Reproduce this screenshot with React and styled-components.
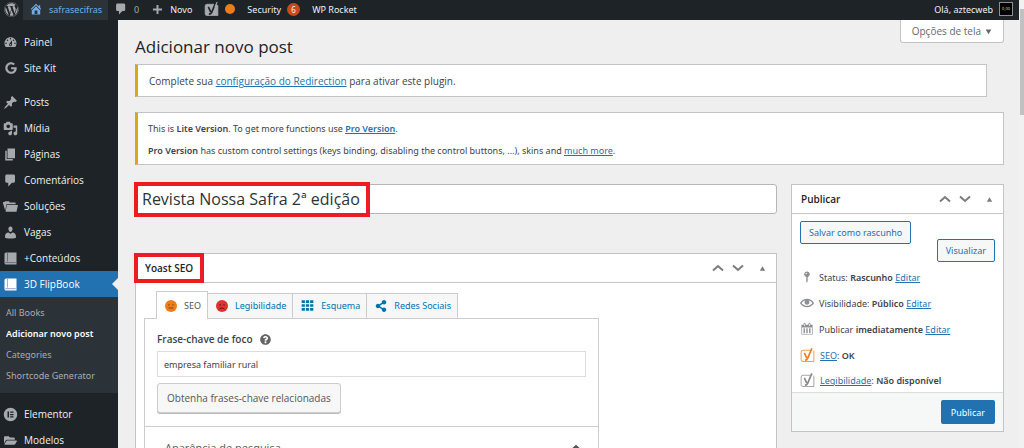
import React from 'react';
import styled, { createGlobalStyle, css } from 'styled-components';
import { FaWordpress, FaGoogle, FaFolderOpen, FaQuestionCircle, FaShareAlt } from 'react-icons/fa';

const GlobalStyle = createGlobalStyle`
  * {
    box-sizing: border-box;
  }
  body {
    margin: 0;
    background: #efefef;
    color: #3c434a;
    font: 10px/13px "Open Sans", "Noto Sans", sans-serif;
  }
  button, input {
    margin: 0;
    font: inherit;
    color: inherit;
  }
  h1, h2, p, ul {
    margin: 0;
    padding: 0;
  }
  ul {
    list-style: none;
  }
  b, strong {
    font-weight: 600;
  }
  svg {
    display: block;
    flex: none;
  }
`;

const smallText = css`
  font-family: "Noto Sans", "Open Sans", sans-serif;
  font-size: 9px;
`;

const Window = styled.div`
  display: flex;
  height: 100vh;
  overflow: hidden;
`;

const Page = styled.div`
  display: flex;
  flex: 1;
  flex-direction: column;
  min-width: 0;
`;

const ScrollTrack = styled.div`
  width: 5px;
  padding: 9px 0 0 1px;
  background: #f1f1f1;
`;

const ScrollThumb = styled.div`
  height: 106px;
  background: #c1c1c1;
`;

/* admin bar */

const AdminBar = styled.header`
  ${smallText}
  display: flex;
  flex: none;
  align-items: center;
  height: 20px;
  background: #1d2327;
  color: #f0f0f1;
`;

const BarLink = styled.a`
  display: flex;
  align-items: center;
  height: 20px;
  padding: 0 ${p => p.$tight ? 4 : 6}px 2px;
  gap: ${p => p.$gap || 6}px;
  color: ${p => p.$muted ? '#a7aaad' : p.$active ? '#72aee6' : '#f0f0f1'};
  background: ${p => p.$active ? '#2c3338' : 'transparent'};
  text-decoration: none;
  white-space: nowrap;
  svg {
    color: ${p => p.$active ? '#72aee6' : '#a7aaad'};
  }
`;

const Spacer = styled.div`
  flex: 1;
`;

const Dot = styled.span`
  width: 10px;
  height: 10px;
  border-radius: 50%;
  background: #ee7c1b;
`;

const Count = styled.span`
  width: 13px;
  height: 13px;
  border-radius: 50%;
  background: #ca4a1f;
  font-size: 8px;
  line-height: 13px;
  text-align: center;
`;

const Avatar = styled.span`
  width: 14px;
  height: 14px;
  border: 1px solid #8c8f94;
  background: #000;
  color: #ddd;
  font-size: 4px;
  line-height: 11px;
  text-align: center;
`;

/* side menu */

const Body = styled.div`
  display: flex;
  flex: 1;
  min-height: 0;
`;

const SideMenu = styled.nav`
  flex: none;
  width: 118px;
  padding-top: 9px;
  background: #1d2327;
`;

const MenuGroup = styled.ul`
  margin-bottom: 8px;
`;

const MenuLink = styled.a`
  position: relative;
  display: flex;
  align-items: center;
  gap: 6px;
  height: 26px;
  padding-left: 3px;
  color: ${p => p.$active ? '#fff' : '#f0f0f1'};
  background: ${p => p.$active ? '#2271b1' : 'transparent'};
  text-decoration: none;
  svg {
    color: ${p => p.$active ? '#fff' : '#a7aaad'};
  }
  ${p => p.$active && css`
    &::after {
      content: '';
      position: absolute;
      right: 0;
      border: 6px solid transparent;
      border-right-color: #efefef;
      border-left: 0;
    }
  `}
`;

const MenuIcon = styled.span`
  display: flex;
  justify-content: center;
  width: 15px;
`;

const SubMenu = styled.ul`
  padding: 5px 6px 7px;
  background: #2c3338;
`;

const SubLink = styled.a`
  ${smallText}
  display: block;
  color: ${p => p.$current ? '#fff' : '#a9acaf'};
  font-weight: ${p => p.$current ? 600 : 400};
  line-height: 21px;
  text-decoration: none;
  white-space: nowrap;
`;

/* content */

const Content = styled.main`
  flex: 1;
  min-width: 0;
  padding: 0 15px 0 17px;
`;

const Heading = styled.div`
  display: flex;
  align-items: flex-start;
  justify-content: space-between;
  height: 44px;
`;

const PageTitle = styled.h1`
  padding-top: 15px;
  color: #1d2327;
  font-size: 17px;
  font-weight: 400;
  line-height: 24px;
`;

const ScreenOptions = styled.button`
  display: flex;
  align-items: center;
  gap: 4px;
  height: 23px;
  padding: 0 11px;
  border: 1px solid #c3c4c7;
  border-top: 0;
  border-radius: 0 0 3px 3px;
  background: #fff;
  color: #646970;
`;

const Notice = styled.section`
  ${p => !p.$inset && smallText}
  display: flex;
  flex-direction: column;
  gap: 9px;
  margin: 0 ${p => p.$inset ? 17 : 0}px 15px 0;
  padding: ${p => p.$inset ? '10px 11px 8px' : '9px 10px 7px'};
  border: 1px solid #c3c4c7;
  border-left: 3px solid #dba617;
  background: #fff;
`;

const Link = styled.a`
  color: #2271b1;
  text-decoration: underline;
`;

const Columns = styled.div`
  display: grid;
  grid-template-columns: 1fr 213px;
  gap: 14px;
  align-items: start;
  margin-top: 19px;
`;

const TitleField = styled.div`
  position: relative;
  margin-bottom: 39px;
`;

const TitleInput = styled.input`
  display: block;
  width: 100%;
  height: 30px;
  padding: 0 6px;
  border: 1px solid #b4b6ba;
  border-radius: 3px;
  background: #fff;
  color: #2c3338;
  font-size: 16px;
`;

const Highlight = styled.span`
  position: absolute;
  top: ${p => p.$top}px;
  left: ${p => p.$left}px;
  width: ${p => p.$width}px;
  height: ${p => p.$height}px;
  border: 4px solid #ed1c24;
  pointer-events: none;
`;

const Box = styled.section`
  border: 1px solid #c3c4c7;
  background: #fff;
`;

const BoxHeader = styled.header`
  position: relative;
  display: flex;
  align-items: center;
  height: 29px;
  padding: 0 4px 0 9px;
  border-bottom: 1px solid #c3c4c7;
`;

const BoxTitle = styled.h2`
  flex: 1;
  color: #1d2327;
  font-size: 10px;
  font-weight: 600;
`;

const ToggleButton = styled.button`
  display: flex;
  align-items: center;
  justify-content: center;
  width: 20px;
  height: 20px;
  margin-left: ${p => p.$apart ? 4 : 0}px;
  padding: 0;
  border: 0;
  background: none;
  color: #787c82;
`;

const Tabs = styled.div`
  display: flex;
  align-items: flex-end;
  margin: 8px 0 0 20px;
`;

const Tab = styled.button`
  ${smallText}
  display: flex;
  align-items: center;
  gap: 7px;
  height: ${p => p.$selected ? 28 : 25}px;
  margin-bottom: ${p => p.$selected ? -1 : 0}px;
  margin-left: ${p => p.$selected ? 0 : -1}px;
  padding: 0 6px 0 8px;
  border: 1px solid #ccc;
  border-bottom: ${p => p.$selected ? 0 : '1px solid #f7f7f7'};
  background: ${p => p.$selected ? '#fff' : '#f7f7f7'};
  color: ${p => p.$selected ? '#555' : '#0073aa'};
  z-index: ${p => p.$selected ? 1 : 0};
`;

const Panel = styled.div`
  width: 455px;
  margin-left: 8px;
  border: 1px solid #ccc;
`;

const Keyphrase = styled.div`
  padding: 14px 12px 13px;
  border-bottom: 1px solid #ccc;
`;

const KeyphraseLabel = styled.div`
  display: flex;
  align-items: center;
  gap: 7px;
  margin-bottom: 5px;
  font-weight: 600;
  svg {
    color: #646464;
  }
`;

const KeyphraseInput = styled.input`
  ${smallText}
  display: block;
  width: 100%;
  height: 26px;
  margin-bottom: 6px;
  padding: 0 6px;
  border: 1px solid #ddd;
  background: #fff;
`;

const RelatedButton = styled.button`
  height: 30px;
  padding: 0 9px;
  border: 1px solid #ccc;
  border-radius: 3px;
  background: #f7f7f7;
  box-shadow: 0 1px 0 #bbb;
  color: #555;
`;

const Collapsible = styled.button`
  display: flex;
  align-items: center;
  justify-content: space-between;
  width: 100%;
  padding: 14px 16px 14px 20px;
  border: 0;
  background: none;
  color: #555;
  font-size: 11px;
`;

const PublishActions = styled.div`
  display: flex;
  flex-direction: column;
  padding: 7px 8px 2px;
`;

const OutlineButton = styled.button`
  ${smallText}
  align-self: ${p => p.$end ? 'flex-end' : 'flex-start'};
  height: 23px;
  margin-top: ${p => p.$end ? -5 : 0}px;
  padding: 0 8px;
  border: 1px solid #2271b1;
  border-radius: 2px;
  background: #f6f7f7;
  color: #2271b1;
`;

const StatusList = styled.ul`
  ${smallText}
  padding: 0 8px;
`;

const StatusItem = styled.li`
  display: flex;
  align-items: center;
  gap: 5px;
  height: ${p => p.$short ? 24 : 26}px;
  svg {
    color: #8c8f94;
  }
`;

const PublishFooter = styled.footer`
  display: flex;
  justify-content: flex-end;
  padding: 7px 8px;
  border-top: 1px solid #dcdcde;
  background: #f6f7f7;
`;

const PrimaryButton = styled.button`
  ${smallText}
  height: 24px;
  padding: 0 10px;
  border: 0;
  border-radius: 2px;
  background: #2271b1;
  color: #fff;
`;

/* icons, all on a 20 unit grid */

const paths = {
  dashboard: 'M3.76 16h12.48c1.1-1.37 1.76-3.11 1.76-5 0-4.42-3.58-8-8-8s-8 3.58-8 8c0 1.89.66 3.63 1.76 5zM10 4c.55 0 1 .45 1 1s-.45 1-1 1-1-.45-1-1 .45-1 1-1zM6 6c.55 0 1 .45 1 1s-.45 1-1 1-1-.45-1-1 .45-1 1-1zm8 0c.55 0 1 .45 1 1s-.45 1-1 1-1-.45-1-1 .45-1 1-1zm-5.37 5.55L12 7v6c0 1.1-.9 2-2 2s-2-.9-2-2c0-.57.24-1.08.63-1.45zM4 10c.55 0 1 .45 1 1s-.45 1-1 1-1-.45-1-1 .45-1 1-1zm12 0c.55 0 1 .45 1 1s-.45 1-1 1-1-.45-1-1 .45-1 1-1zm-5 3c0-.55-.45-1-1-1s-1 .45-1 1 .45 1 1 1 1-.45 1-1z',
  pin: 'M10.44 3.02l1.82-1.82 6.36 6.35-1.83 1.82c-1.05-.68-2.48-.57-3.41.36l-.75.75c-.92.93-1.04 2.35-.35 3.41l-1.83 1.82-2.41-2.41-2.8 2.79c-.42.42-3.38 2.71-3.8 2.29s1.86-3.39 2.28-3.81l2.79-2.79L4.1 9.36l1.83-1.82c1.05.69 2.48.57 3.4-.36l.75-.75c.93-.92 1.05-2.35.36-3.41z',
  media: 'M13 11V4c0-.55-.45-1-1-1h-1.67L9 1H5L3.67 3H2c-.55 0-1 .45-1 1v7c0 .55.45 1 1 1h10c.55 0 1-.45 1-1zM7 4.5c1.38 0 2.5 1.12 2.5 2.5S8.38 9.5 7 9.5 4.5 8.38 4.5 7 5.62 4.5 7 4.5zM14 6h5v10.5c0 1.38-1.12 2.5-2.5 2.5S14 17.88 14 16.5s1.12-2.5 2.5-2.5c.17 0 .34.02.5.05V9h-3V6zm-4 8.05V13h2v3.5c0 1.38-1.12 2.5-2.5 2.5S7 17.88 7 16.5 8.12 14 9.5 14c.17 0 .34.02.5.05z',
  page: 'M6 15V2h10v13H6zm-1 1h8v2H3V5h2v11z',
  comment: 'M5 2h9c1.1 0 2 .9 2 2v7c0 1.1-.9 2-2 2h-2l-5 5v-5H5c-1.1 0-2-.9-2-2V4c0-1.1.9-2 2-2z',
  folder: 'M0 4h2l1-1h5l1 1.500h7.500l.5 2.500H4.500L3 15.500 0 5.500zM5 8h15l-2 9H3.500z',
  user: 'M10 9.25c-2.27 0-2.73-3.44-2.73-3.44C7 4.02 7.82 2 9.97 2c2.16 0 2.98 2.02 2.71 3.81 0 0-.41 3.44-2.68 3.44zm0 2.57L12.72 10c2.39 0 4.52 2.33 4.52 4.53v2.49s-3.65 1.13-7.24 1.13c-3.65 0-7.24-1.13-7.24-1.13v-2.49c0-2.25 1.94-4.48 4.47-4.48z',
  home: 'M16 8.5l1.53 1.53-1.06 1.06L10 4.6l-6.47 6.49-1.06-1.06L10 2.5l4 4v-2h2v4zm-6-2.46l6 5.99V18H4v-5.97zM12 17v-5H8v5h4z',
  plus: 'M17 8.500v3h-5.500V17h-3v-5.500H3v-3h5.500V3h3v5.500z',
  status: 'M14 6c0 1.86-1.28 3.41-3 3.86V16c0 1-2 2-2 2V9.86c-1.72-.45-3-2-3-3.86 0-2.21 1.79-4 4-4s4 1.79 4 4zM8 5c0 .55.45 1 1 1s1-.45 1-1-.45-1-1-1-1 .45-1 1z',
  eye: 'M19.7 9.4C17.7 6 14 3.9 10 3.9S2.3 6 .3 9.4L0 10l.3.6c2 3.4 5.7 5.5 9.7 5.5s7.7-2.1 9.7-5.5l.3-.6-.3-.6zM10 14.1c-3.1 0-6-1.6-7.7-4.1C3.6 8 5.7 6.6 8 6.1c-.9.6-1.500 1.7-1.500 2.9 0 1.9 1.6 3.5 3.5 3.5s3.5-1.6 3.5-3.5c0-1.2-.6-2.3-1.500-2.9 2.3.5 4.4 1.9 5.7 3.9-1.7 2.5-4.6 4.1-7.7 4.1z',
  calendar: 'M15 4h3v14H2V4h3V3c0-.83.67-1.5 1.5-1.5S8 2.17 8 3v1h4V3c0-.83.67-1.5 1.5-1.5S15 2.17 15 3v1zM6 3v2.5c0 .28.22.5.5.5s.5-.22.5-.5V3c0-.28-.22-.5-.5-.5S6 2.72 6 3zm7 0v2.5c0 .28.22.5.5.5s.5-.22.5-.5V3c0-.28-.22-.5-.5-.5s-.5.22-.5.5zm4 14V8H3v9h14zM7 16V9H5v7h2zm4 0V9H9v7h2zm4 0V9h-2v7h2z',
  grid: 'M1 2h5v4H1zM7.500 2h5v4h-5zM14 2h5v4h-5zM1 8h5v4H1zM7.500 8h5v4h-5zM14 8h5v4h-5zM1 14h5v4H1zM7.500 14h5v4h-5zM14 14h5v4h-5z',
  elementor: 'M10 1a9 9 0 1 1 0 18 9 9 0 0 1 0-18zM6 6v8h2V6zM9.500 6v1.700H14V6zM9.500 9.200v1.700H14V9.200zM9.500 12.300V14H14v-1.700z',
  triangle: 'M10 5l6 10H4z',
  triangleDown: 'M2 4h16l-8 14z',
};

const Icon = ({ name, size = 15 }) => (
  <svg width={size} height={size} viewBox="0 0 20 20" fill="currentColor" fillRule="evenodd" aria-hidden="true">
    <path d={paths[name]} />
  </svg>
);

const BookIcon = ({ spine }) => (
  <svg width="15" height="15" viewBox="0 0 20 20" aria-hidden="true">
    <path fill="currentColor" d="M4 2h14v16H4a2 2 0 0 1-2-2V4a2 2 0 0 1 2-2z" />
    <path fill="none" stroke={spine} strokeWidth="1" d="M6 2v12M3 15.500h14" />
  </svg>
);

const Chevron = ({ up }) => (
  <svg width="12" height="8" viewBox="0 0 12 8" fill="none" stroke="currentColor" strokeWidth="2" aria-hidden="true">
    <path d={up ? 'M1 6.500l5-4.500 5 4.500' : 'M1 1.500l5 4.500 5-4.500'} />
  </svg>
);

const Face = ({ color, ink, sad }) => (
  <svg width="12" height="12" viewBox="0 0 12 12" aria-hidden="true">
    <circle cx="6" cy="6" r="6" fill={color} />
    <g fill="none" stroke={ink} strokeWidth="1">
      <path d="M4 4v1.500M8 4v1.500" />
      <path d={sad ? 'M3.500 9q2.500-2.400 5 0' : 'M3.700 8h4.600'} />
    </g>
  </svg>
);

const YoastIcon = ({ color, filled }) => (
  <svg width="15" height="15" viewBox="0 0 20 20" fill="none" aria-hidden="true">
    <path
      d="M13.500 3H4a2.500 2.500 0 0 0-2.500 2.500v10A2.500 2.500 0 0 0 4 18h14.500V5.500a2.500 2.500 0 0 0-1-2"
      stroke={color}
      strokeWidth="1"
      fill={filled ? color : 'none'}
    />
    <g stroke={filled ? '#1d2327' : color} strokeWidth="2.200">
      <path d="M5.800 6.500l3.200 7" />
      <path d="M15.800 .5l-5.600 13.300q-1 2.500-3.700 2.400" />
    </g>
    {filled && <path d="M17.500 0l-3 7" stroke={color} strokeWidth="1.500" />}
  </svg>
);

const mainItems = [
  { label: 'Posts', icon: <Icon name="pin" /> },
  { label: 'Mídia', icon: <Icon name="media" /> },
  { label: 'Páginas', icon: <Icon name="page" /> },
  { label: 'Comentários', icon: <Icon name="comment" /> },
  { label: 'Soluções', icon: <Icon name="folder" /> },
  { label: 'Vagas', icon: <Icon name="user" /> },
  { label: '+Conteúdos', icon: <BookIcon spine="#5b5470" /> },
  { label: '3D FlipBook', icon: <BookIcon spine="#8f86d8" />, active: true },
];

const subItems = ['All Books', 'Adicionar novo post', 'Categories', 'Shortcode Generator'];

const MenuItem = ({ label, icon, active }) => (
  <li>
    <MenuLink href="#" $active={active}>
      <MenuIcon>{icon}</MenuIcon>
      {label}
    </MenuLink>
  </li>
);

const BoxControls = () => (
  <>
    <ToggleButton type="button" aria-label="Mover para cima"><Chevron up /></ToggleButton>
    <ToggleButton type="button" aria-label="Mover para baixo"><Chevron /></ToggleButton>
    <ToggleButton type="button" aria-label="Alternar painel" $apart><Icon name="triangle" size={9} /></ToggleButton>
  </>
);

const Sidebar = () => (
  <SideMenu>
    <MenuGroup>
      <MenuItem label="Painel" icon={<Icon name="dashboard" />} />
      <MenuItem label="Site Kit" icon={<FaGoogle size={12} />} />
    </MenuGroup>
    <MenuGroup>
      {mainItems.map(item => <MenuItem key={item.label} {...item} />)}
      <li>
        <SubMenu>
          {subItems.map((label, i) => (
            <li key={label}><SubLink href="#" $current={i === 1}>{label}</SubLink></li>
          ))}
        </SubMenu>
      </li>
    </MenuGroup>
    <MenuGroup>
      <MenuItem label="Elementor" icon={<Icon name="elementor" />} />
      <MenuItem label="Modelos" icon={<FaFolderOpen size={13} />} />
    </MenuGroup>
  </SideMenu>
);

const YoastBox = () => (
  <Box>
    <BoxHeader>
      <BoxTitle>Yoast SEO</BoxTitle>
      <BoxControls />
      <Highlight $top={-1} $left={-2} $width={70} $height={30} />
    </BoxHeader>
    <Tabs role="tablist">
      <Tab type="button" role="tab" aria-selected="true" $selected><Face color="#ee7c1b" ink="#7a4413" />SEO</Tab>
      <Tab type="button" role="tab"><Face color="#dc3232" ink="#5e1616" sad />Legibilidade</Tab>
      <Tab type="button" role="tab"><Icon name="grid" size={13} />Esquema</Tab>
      <Tab type="button" role="tab"><FaShareAlt size={12} />Redes Sociais</Tab>
    </Tabs>
    <Panel>
      <Keyphrase>
        <KeyphraseLabel>
          <label htmlFor="keyphrase">Frase-chave de foco</label>
          <FaQuestionCircle size={11} />
        </KeyphraseLabel>
        <KeyphraseInput id="keyphrase" defaultValue="empresa familiar rural" />
        <RelatedButton type="button">Obtenha frases-chave relacionadas</RelatedButton>
      </Keyphrase>
      <Collapsible type="button">
        Aparência de pesquisa
        <Chevron up />
      </Collapsible>
    </Panel>
  </Box>
);

const PublishBox = () => (
  <Box>
    <BoxHeader>
      <BoxTitle>Publicar</BoxTitle>
      <BoxControls />
    </BoxHeader>
    <PublishActions>
      <OutlineButton type="button">Salvar como rascunho</OutlineButton>
      <OutlineButton type="button" $end>Visualizar</OutlineButton>
    </PublishActions>
    <StatusList>
      <StatusItem><Icon name="status" size={14} /><span>Status: <b>Rascunho</b> <Link href="#">Editar</Link></span></StatusItem>
      <StatusItem><Icon name="eye" size={14} /><span>Visibilidade: <b>Público</b> <Link href="#">Editar</Link></span></StatusItem>
      <StatusItem><Icon name="calendar" size={14} /><span>Publicar <b>imediatamente</b> <Link href="#">Editar</Link></span></StatusItem>
      <StatusItem><YoastIcon color="#ee7c1b" /><span><Link href="#">SEO</Link>: <b>OK</b></span></StatusItem>
      <StatusItem $short><YoastIcon color="#888" /><span><Link href="#">Legibilidade</Link>: <b>Não disponível</b></span></StatusItem>
    </StatusList>
    <PublishFooter>
      <PrimaryButton type="button">Publicar</PrimaryButton>
    </PublishFooter>
  </Box>
);

const App = () => (
  <Window>
    <GlobalStyle />
    <Page>
      <AdminBar>
        <BarLink href="#" aria-label="WordPress" $tight><FaWordpress size={15} /></BarLink>
        <BarLink href="#" $active><Icon name="home" size={14} />safrasecifras</BarLink>
        <BarLink href="#" $muted><Icon name="comment" size={14} />0</BarLink>
        <BarLink href="#"><Icon name="plus" size={13} />Novo</BarLink>
        <BarLink href="#" aria-label="Yoast"><YoastIcon color="#a7aaad" filled /><Dot /></BarLink>
        <BarLink href="#" $gap={6}>Security <Count>6</Count></BarLink>
        <BarLink href="#">WP Rocket</BarLink>
        <Spacer />
        <BarLink href="#" $gap={6}>Olá, aztecweb <Avatar>0,00</Avatar></BarLink>
      </AdminBar>
      <Body>
        <Sidebar />
        <Content>
          <Heading>
            <PageTitle>Adicionar novo post</PageTitle>
            <ScreenOptions type="button">Opções de tela <Icon name="triangleDown" size={7} /></ScreenOptions>
          </Heading>
          <Notice $inset>
            <p>Complete sua <Link href="#">configuração do Redirection</Link> para ativar este plugin.</p>
          </Notice>
          <Notice>
            <p>This is <b>Lite Version</b>. To get more functions use <Link href="#"><b>Pro Version</b></Link>.</p>
            <p><b>Pro Version</b> has custom control settings (keys binding, disabling the control buttons, ...), skins and <Link href="#">much more</Link>.</p>
          </Notice>
          <Columns>
            <div>
              <TitleField>
                <TitleInput aria-label="Título" defaultValue="Revista Nossa Safra 2ª edição" />
                <Highlight $top={-2} $left={-1} $width={236} $height={35} />
              </TitleField>
              <YoastBox />
            </div>
            <PublishBox />
          </Columns>
        </Content>
      </Body>
    </Page>
    <ScrollTrack><ScrollThumb /></ScrollTrack>
  </Window>
);

export default App;
